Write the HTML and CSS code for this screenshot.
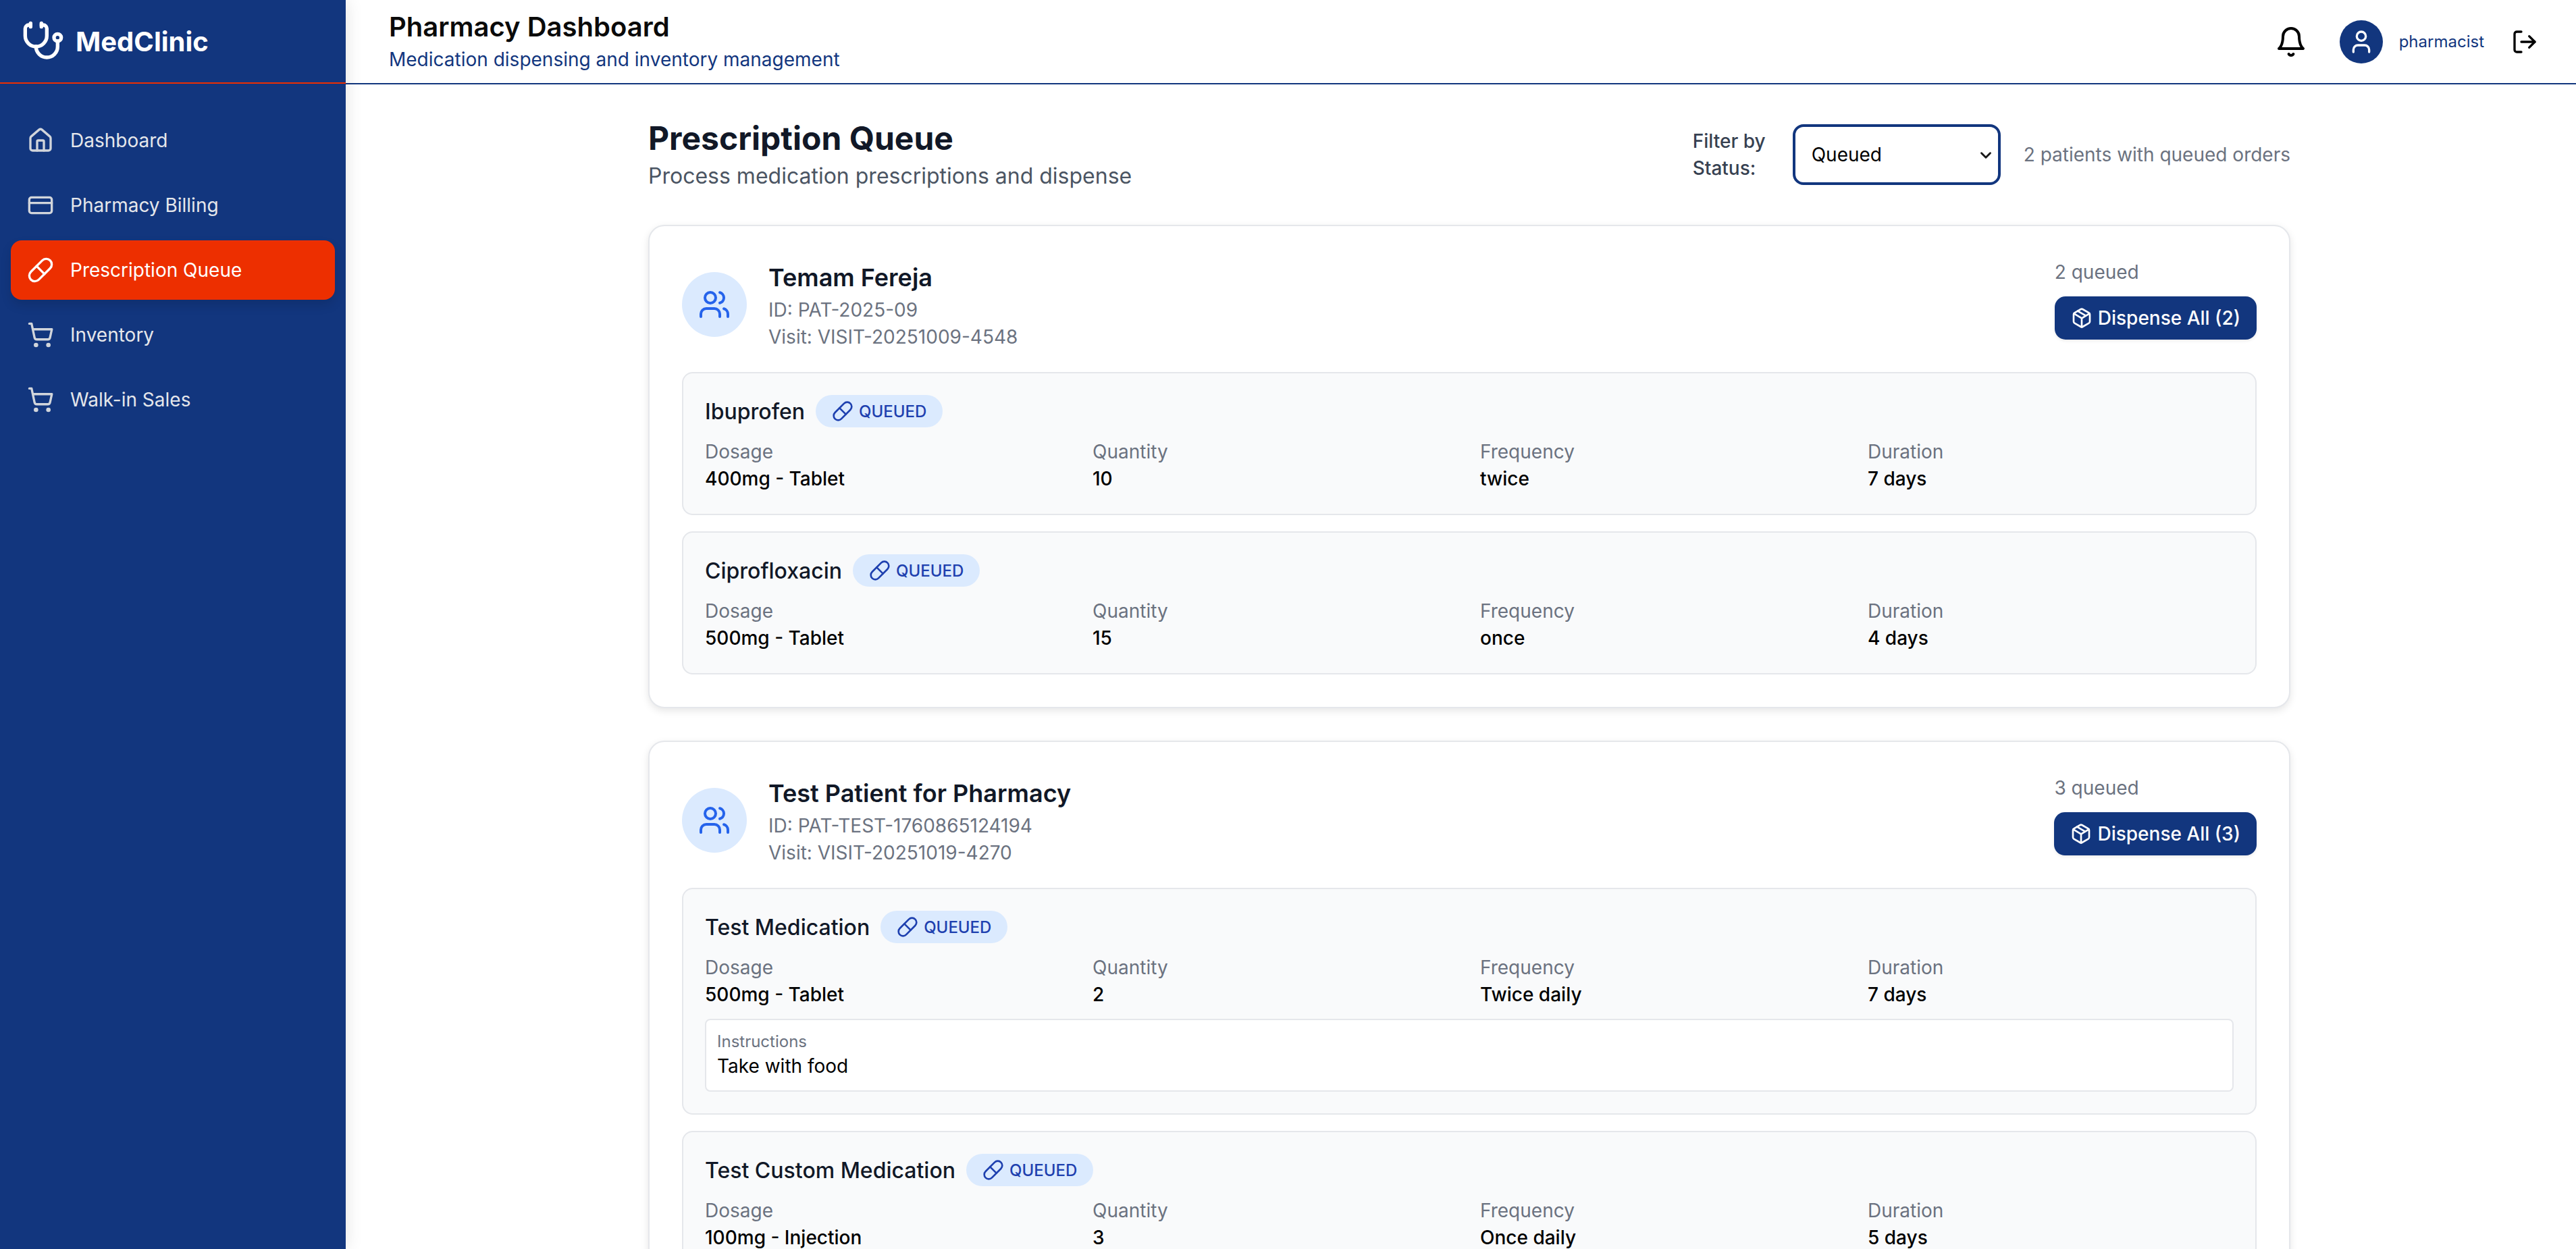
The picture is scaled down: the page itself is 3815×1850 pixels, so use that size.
FILE: index.html
```html
<!DOCTYPE html>
<html lang="en">
<head>
  <meta charset="UTF-8">
  <meta name="viewport" content="width=device-width, initial-scale=1.0">
  <title>Pharmacy Dashboard</title>
  <link rel="stylesheet" href="styles.css">
</head>
<body>
  <svg class="icon-defs" xmlns="http://www.w3.org/2000/svg">
    <symbol id="i-steth" viewBox="0 0 24 24"><path d="M11 2v2"/><path d="M5 2v2"/><path d="M5 3H4a2 2 0 0 0-2 2v4a6 6 0 0 0 12 0V5a2 2 0 0 0-2-2h-1"/><path d="M8 15a6 6 0 0 0 12 0v-3"/><circle cx="20" cy="10" r="2"/></symbol>
    <symbol id="i-home" viewBox="0 0 24 24"><path d="M15 21v-8a1 1 0 0 0-1-1h-4a1 1 0 0 0-1 1v8"/><path d="M3 10a2 2 0 0 1 .709-1.528l7-5.999a2 2 0 0 1 2.582 0l7 5.999A2 2 0 0 1 21 10v9a2 2 0 0 1-2 2H5a2 2 0 0 1-2-2z"/></symbol>
    <symbol id="i-card" viewBox="0 0 24 24"><rect width="20" height="14" x="2" y="5" rx="2"/><line x1="2" x2="22" y1="10" y2="10"/></symbol>
    <symbol id="i-pill" viewBox="0 0 24 24"><path d="m10.5 20.5 10-10a4.95 4.95 0 1 0-7-7l-10 10a4.95 4.95 0 1 0 7 7Z"/><path d="m8.5 8.5 7 7"/></symbol>
    <symbol id="i-cart" viewBox="0 0 24 24"><circle cx="8" cy="21" r="1"/><circle cx="19" cy="21" r="1"/><path d="M2.05 2.05h2l2.66 12.42a2 2 0 0 0 2 1.58h9.78a2 2 0 0 0 1.95-1.57l1.65-7.43H5.12"/></symbol>
    <symbol id="i-bell" viewBox="0 0 24 24"><path d="M6 8a6 6 0 0 1 12 0c0 7 3 9 3 9H3s3-2 3-9"/><path d="M10.3 21a1.94 1.94 0 0 0 3.4 0"/></symbol>
    <symbol id="i-user" viewBox="0 0 24 24"><path d="M19 21v-2a4 4 0 0 0-4-4H9a4 4 0 0 0-4 4v2"/><circle cx="12" cy="7" r="4"/></symbol>
    <symbol id="i-logout" viewBox="0 0 24 24"><path d="M9 21H5a2 2 0 0 1-2-2V5a2 2 0 0 1 2-2h4"/><polyline points="16 17 21 12 16 7"/><line x1="21" x2="9" y1="12" y2="12"/></symbol>
    <symbol id="i-users" viewBox="0 0 24 24"><path d="M16 21v-2a4 4 0 0 0-4-4H6a4 4 0 0 0-4 4v2"/><circle cx="9" cy="7" r="4"/><path d="M22 21v-2a4 4 0 0 0-3-3.87"/><path d="M16 3.13a4 4 0 0 1 0 7.75"/></symbol>
    <symbol id="i-package" viewBox="0 0 24 24"><path d="M11 21.73a2 2 0 0 0 2 0l7-4A2 2 0 0 0 21 16V8a2 2 0 0 0-1-1.73l-7-4a2 2 0 0 0-2 0l-7 4A2 2 0 0 0 3 8v8a2 2 0 0 0 1 1.73z"/><path d="M12 22V12"/><path d="m3.3 7 7.703 4.734a2 2 0 0 0 1.994 0L20.7 7"/><path d="m7.5 4.27 9 5.15"/></symbol>
    <symbol id="i-chevron" viewBox="0 0 24 24"><path d="m6 9 6 6 6-6"/></symbol>
  </svg>

  <aside class="sidebar">
    <div class="brand">
      <svg class="icon brand-icon"><use href="#i-steth"/></svg>
      <span class="brand-name">MedClinic</span>
    </div>
    <nav class="nav">
      <a class="nav-item"><svg class="icon nav-icon"><use href="#i-home"/></svg>Dashboard</a>
      <a class="nav-item"><svg class="icon nav-icon"><use href="#i-card"/></svg>Pharmacy Billing</a>
      <a class="nav-item active"><svg class="icon nav-icon"><use href="#i-pill"/></svg>Prescription Queue</a>
      <a class="nav-item"><svg class="icon nav-icon"><use href="#i-cart"/></svg>Inventory</a>
      <a class="nav-item"><svg class="icon nav-icon"><use href="#i-cart"/></svg>Walk-in Sales</a>
    </nav>
  </aside>

  <div class="content">
    <header class="topbar">
      <div>
        <h1 class="topbar-title">Pharmacy Dashboard</h1>
        <p class="topbar-sub">Medication dispensing and inventory management</p>
      </div>
      <div class="topbar-right">
        <svg class="icon bell"><use href="#i-bell"/></svg>
        <div class="user">
          <span class="user-avatar"><svg class="icon user-icon"><use href="#i-user"/></svg></span>
          <span class="user-name">pharmacist</span>
        </div>
        <svg class="icon logout"><use href="#i-logout"/></svg>
      </div>
    </header>

    <main class="main">
      <div class="page-head">
        <div>
          <h2 class="page-title">Prescription Queue</h2>
          <p class="page-sub">Process medication prescriptions and dispense</p>
        </div>
        <div class="filter">
          <label class="filter-label" for="status">Filter by Status:</label>
          <div class="select-wrap">
            <select class="filter-select" id="status">
              <option>Queued</option>
              <option>Dispensed</option>
            </select>
            <svg class="icon select-arrow"><use href="#i-chevron"/></svg>
          </div>
          <span class="filter-count">2 patients with queued orders</span>
        </div>
      </div>

      <section class="card">
        <div class="card-head">
          <div class="patient">
            <span class="patient-avatar"><svg class="icon patient-icon"><use href="#i-users"/></svg></span>
            <div>
              <h3 class="patient-name">Temam Fereja</h3>
              <p class="patient-meta">ID: PAT-2025-09</p>
              <p class="patient-meta">Visit: VISIT-20251009-4548</p>
            </div>
          </div>
          <div class="card-actions">
            <p class="queued-count">2 queued</p>
            <button class="dispense-btn"><svg class="icon btn-icon"><use href="#i-package"/></svg>Dispense All (2)</button>
          </div>
        </div>

        <div class="med">
          <div class="med-head">
            <span class="med-name">Ibuprofen</span>
            <span class="badge"><svg class="icon badge-icon"><use href="#i-pill"/></svg>QUEUED</span>
          </div>
          <div class="med-grid">
            <div><p class="field-label">Dosage</p><p class="field-value">400mg - Tablet</p></div>
            <div><p class="field-label">Quantity</p><p class="field-value">10</p></div>
            <div><p class="field-label">Frequency</p><p class="field-value">twice</p></div>
            <div><p class="field-label">Duration</p><p class="field-value">7 days</p></div>
          </div>
        </div>

        <div class="med">
          <div class="med-head">
            <span class="med-name">Ciprofloxacin</span>
            <span class="badge"><svg class="icon badge-icon"><use href="#i-pill"/></svg>QUEUED</span>
          </div>
          <div class="med-grid">
            <div><p class="field-label">Dosage</p><p class="field-value">500mg - Tablet</p></div>
            <div><p class="field-label">Quantity</p><p class="field-value">15</p></div>
            <div><p class="field-label">Frequency</p><p class="field-value">once</p></div>
            <div><p class="field-label">Duration</p><p class="field-value">4 days</p></div>
          </div>
        </div>
      </section>

      <section class="card">
        <div class="card-head">
          <div class="patient">
            <span class="patient-avatar"><svg class="icon patient-icon"><use href="#i-users"/></svg></span>
            <div>
              <h3 class="patient-name">Test Patient for Pharmacy</h3>
              <p class="patient-meta">ID: PAT-TEST-1760865124194</p>
              <p class="patient-meta">Visit: VISIT-20251019-4270</p>
            </div>
          </div>
          <div class="card-actions">
            <p class="queued-count">3 queued</p>
            <button class="dispense-btn"><svg class="icon btn-icon"><use href="#i-package"/></svg>Dispense All (3)</button>
          </div>
        </div>

        <div class="med">
          <div class="med-head">
            <span class="med-name">Test Medication</span>
            <span class="badge"><svg class="icon badge-icon"><use href="#i-pill"/></svg>QUEUED</span>
          </div>
          <div class="med-grid">
            <div><p class="field-label">Dosage</p><p class="field-value">500mg - Tablet</p></div>
            <div><p class="field-label">Quantity</p><p class="field-value">2</p></div>
            <div><p class="field-label">Frequency</p><p class="field-value">Twice daily</p></div>
            <div><p class="field-label">Duration</p><p class="field-value">7 days</p></div>
          </div>
          <div class="instructions">
            <p class="instructions-label">Instructions</p>
            <p class="instructions-text">Take with food</p>
          </div>
        </div>

        <div class="med">
          <div class="med-head">
            <span class="med-name">Test Custom Medication</span>
            <span class="badge"><svg class="icon badge-icon"><use href="#i-pill"/></svg>QUEUED</span>
          </div>
          <div class="med-grid">
            <div><p class="field-label">Dosage</p><p class="field-value">100mg - Injection</p></div>
            <div><p class="field-label">Quantity</p><p class="field-value">3</p></div>
            <div><p class="field-label">Frequency</p><p class="field-value">Once daily</p></div>
            <div><p class="field-label">Duration</p><p class="field-value">5 days</p></div>
          </div>
        </div>
      </section>
    </main>
  </div>
</body>
</html>
```

FILE: styles.css
```css
* {
  box-sizing: border-box;
}
html, body {
  height: 100%;
}
body {
  margin: 0;
  display: flex;
  overflow: hidden;
  font-family: Inter, "Noto Sans", sans-serif;
  color: #111827;
  background: #fff;
}
h1, h2, h3, p {
  margin: 0;
}
.icon-defs {
  display: none;
}
.icon {
  fill: none;
  stroke: currentColor;
  stroke-width: 2;
  stroke-linecap: round;
  stroke-linejoin: round;
  flex-shrink: 0;
}

/* sidebar */
.sidebar {
  width: 512px;
  flex-shrink: 0;
  background: #12367e;
  box-shadow: 0 0 24px rgba(0, 0, 0, 0.12);
  position: relative;
  z-index: 1;
}
.brand {
  height: 124px;
  padding: 0 32px;
  display: flex;
  align-items: center;
  gap: 16px;
  border-bottom: 2px solid #ed2f00;
  color: #fff;
}
.brand-icon {
  width: 64px;
  height: 64px;
}
.brand-name {
  font-size: 40px;
  font-weight: 700;
}
.nav {
  padding: 40px 16px;
  display: flex;
  flex-direction: column;
  gap: 8px;
}
.nav-item {
  height: 88px;
  padding: 0 24px;
  display: flex;
  align-items: center;
  gap: 24px;
  border-radius: 16px;
  font-size: 28px;
  font-weight: 400;
  color: #e5e7eb;
}
.nav-icon {
  width: 40px;
  height: 40px;
  color: #d1d5db;
}
.nav-item.active {
  background: #ed2f00;
  color: #fff;
  box-shadow: 0 8px 16px rgba(0, 0, 0, 0.12);
}
.nav-item.active .nav-icon {
  color: #fff;
}

/* top bar */
.content {
  flex: 1;
  min-width: 0;
  display: flex;
  flex-direction: column;
  height: 100%;
}
.topbar {
  height: 125px;
  flex-shrink: 0;
  padding: 0 48px 0 64px;
  display: flex;
  align-items: center;
  justify-content: space-between;
  border-bottom: 2px solid #12367e;
}
.topbar-title {
  font-size: 40px;
  line-height: 48px;
  font-weight: 600;
  color: #0a0a0a;
  margin-bottom: 4px;
}
.topbar-sub {
  font-size: 28px;
  line-height: 40px;
  color: #12367e;
}
.topbar-right {
  display: flex;
  align-items: center;
  gap: 32px;
}
.bell {
  width: 48px;
  height: 48px;
  color: #000;
  margin-right: 16px;
}
.user {
  display: flex;
  align-items: center;
  gap: 24px;
}
.user-avatar {
  width: 64px;
  height: 64px;
  border-radius: 50%;
  background: #12367e;
  color: #fff;
  display: flex;
  align-items: center;
  justify-content: center;
}
.user-icon {
  width: 40px;
  height: 40px;
}
.user-name {
  font-size: 24px;
  font-weight: 400;
  color: #12367e;
}
.logout {
  width: 40px;
  height: 40px;
  color: #000;
  margin: 0 8px;
}

/* main */
.main {
  flex: 1;
  min-height: 0;
  overflow: hidden;
  padding: 48px 423px 48px 448px;
}
.page-head {
  display: flex;
  align-items: center;
  justify-content: space-between;
  margin-bottom: 48px;
}
.page-title {
  font-size: 48px;
  line-height: 64px;
  font-weight: 700;
  color: #111827;
}
.page-sub {
  font-size: 32px;
  line-height: 48px;
  color: #4b5563;
}
.filter {
  display: flex;
  align-items: center;
  gap: 32px;
}
.filter-label {
  width: 116px;
  font-size: 28px;
  line-height: 40px;
  font-weight: 500;
  color: #374151;
}
.select-wrap {
  position: relative;
  display: flex;
}
.filter-select {
  width: 308px;
  height: 90px;
  padding: 0 24px;
  appearance: none;
  border: 4px solid #12367e;
  border-radius: 16px;
  background: #fff;
  font-family: inherit;
  font-size: 28px;
  color: #000;
}
.select-arrow {
  position: absolute;
  right: 9px;
  top: 33px;
  width: 26px;
  height: 26px;
  stroke-width: 2.7;
  color: #1a1a1a;
  pointer-events: none;
}
.filter-count {
  margin-left: 2px;
  font-size: 28px;
  color: #6b7280;
}

/* patient cards */
.card {
  padding: 48px;
  margin-bottom: 48px;
  background: #fff;
  border: 2px solid #e5e7eb;
  border-radius: 24px;
  box-shadow: 0 4px 12px rgba(0, 0, 0, 0.1);
}
.card-head {
  display: flex;
  align-items: flex-start;
  justify-content: space-between;
  margin-bottom: 32px;
}
.patient {
  display: flex;
  align-items: center;
  gap: 32px;
}
.patient-avatar {
  width: 96px;
  height: 96px;
  border-radius: 50%;
  background: #dbeafe;
  color: #2563eb;
  display: flex;
  align-items: center;
  justify-content: center;
}
.patient-icon {
  width: 48px;
  height: 48px;
}
.patient-name {
  font-size: 36px;
  line-height: 56px;
  font-weight: 600;
  color: #111827;
}
.patient-meta {
  font-size: 28px;
  line-height: 40px;
  color: #6b7280;
}
.queued-count {
  font-size: 28px;
  line-height: 40px;
  color: #6b7280;
  margin-bottom: 16px;
}
.dispense-btn {
  height: 64px;
  padding: 0 24px;
  display: flex;
  align-items: center;
  gap: 8px;
  border: 0;
  border-radius: 16px;
  background: #12367e;
  color: #fff;
  font-family: inherit;
  font-size: 28px;
  font-weight: 500;
  box-shadow: 0 2px 4px rgba(0, 0, 0, 0.08);
}
.btn-icon {
  width: 32px;
  height: 32px;
}

/* medication rows */
.med {
  padding: 32px;
  background: #f9fafb;
  border: 2px solid #e5e7eb;
  border-radius: 16px;
}
.med + .med {
  margin-top: 24px;
}
.med-head {
  display: flex;
  align-items: center;
  gap: 16px;
  margin-bottom: 16px;
}
.med-name {
  font-size: 32px;
  font-weight: 500;
  color: #111827;
}
.badge {
  height: 48px;
  padding: 0 24px;
  display: flex;
  align-items: center;
  gap: 8px;
  border-radius: 24px;
  background: #dbeafe;
  color: #1e40af;
  font-size: 24px;
  font-weight: 500;
}
.badge-icon {
  width: 32px;
  height: 32px;
}
.med-grid {
  display: grid;
  grid-template-columns: repeat(4, 1fr);
  gap: 32px;
}
.field-label {
  font-size: 28px;
  line-height: 40px;
  color: #6b7280;
}
.field-value {
  font-size: 28px;
  line-height: 40px;
  font-weight: 500;
  color: #000;
}
.instructions {
  margin-top: 16px;
  padding: 16px;
  background: #fff;
  border: 2px solid #e5e7eb;
  border-radius: 8px;
}
.instructions-label {
  font-size: 24px;
  line-height: 32px;
  color: #6b7280;
}
.instructions-text {
  font-size: 28px;
  line-height: 40px;
  color: #000;
}
```
